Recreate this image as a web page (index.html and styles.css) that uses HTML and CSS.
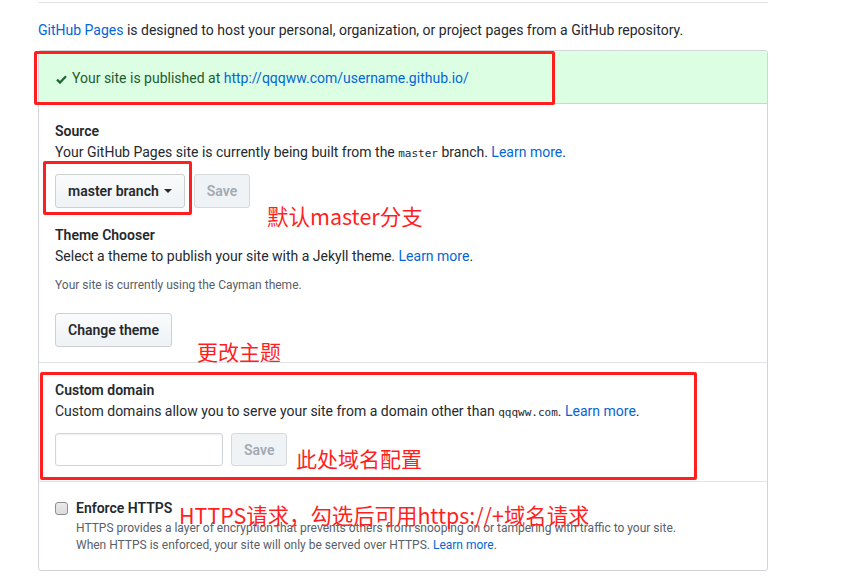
FILE: index.html
```html
<!DOCTYPE html>
<html lang="en">
<head>
<meta charset="utf-8">
<title>GitHub Pages</title>
<link rel="stylesheet" href="styles.css">
</head>
<body>
<div class="page">
  <div class="topline"></div>
  <p class="intro"><a href="#">GitHub Pages</a> is designed to host your personal, organization, or project pages from a GitHub repository.</p>
  <div class="panel">
    <div class="flash">
      <svg class="check" width="11" height="9" viewBox="0 0 11 9" aria-hidden="true"><polyline points="1,4.6 4,7.5 10,1.3" fill="none" stroke-width="2.3"/></svg>
      <span>Your site is published at <a href="#">http://qqqww.com/username.github.io/</a></span>
    </div>
    <div class="section">
      <h3 class="title">Source</h3>
      <p class="desc">Your GitHub Pages site is currently being built from the <code>master</code> branch. <a href="#">Learn more</a>.</p>
      <div class="row">
        <button class="btn"><span>master branch</span><span class="caret"></span></button>
        <button class="btn disabled">Save</button>
      </div>
      <div class="theme">
        <h3 class="title">Theme Chooser</h3>
        <p class="desc">Select a theme to publish your site with a Jekyll theme. <a href="#">Learn more</a>.</p>
        <p class="note">Your site is currently using the Cayman theme.</p>
        <button class="btn">Change theme</button>
      </div>
    </div>
    <div class="section">
      <h3 class="title">Custom domain</h3>
      <p class="desc">Custom domains allow you to serve your site from a domain other than <code>qqqww.com</code>. <a href="#">Learn more</a>.</p>
      <div class="row row-domain">
        <span class="input"></span>
        <button class="btn disabled">Save</button>
      </div>
    </div>
    <div class="section section-last">
      <div class="check-row">
        <span class="checkbox"></span>
        <div class="check-body">
          <h3 class="title">Enforce HTTPS</h3>
          <p class="small">HTTPS provides a layer of encryption that prevents others from snooping on or tampering with traffic to your site.<br>When HTTPS is enforced, your site will only be served over HTTPS. <a href="#">Learn more</a>.</p>
        </div>
      </div>
    </div>
  </div>

  <div class="mark mark-1"></div>
  <div class="mark mark-2"></div>
  <div class="mark mark-3"></div>
  <div class="ann ann-1">默认master分支</div>
  <div class="ann ann-2">更改主题</div>
  <div class="ann ann-3">此处域名配置</div>
  <div class="ann ann-4">HTTPS请求，勾选后可用https://+域名请求</div>
</div>
</body>
</html>
```
FILE: styles.css
```css
html, body {
  margin: 0;
  padding: 0;
  background: #fff;
}
body {
  font-family: Roboto, "Noto Sans", "Liberation Sans", sans-serif;
  font-size: 14px;
  line-height: 21px;
  color: #24292e;
}
a {
  color: #0366d6;
  text-decoration: none;
}
.page {
  position: relative;
  width: 842px;
  height: 580px;
  padding: 2px 0 0 38px;
  box-sizing: border-box;
}
.topline {
  width: 730px;
  border-bottom: 1px solid #e1e4e8;
}
.intro {
  margin: 17px 0 9px;
}
.panel {
  width: 730px;
  box-sizing: border-box;
  border: 1px solid #d1d5da;
  border-radius: 3px;
}
.flash {
  display: flex;
  align-items: center;
  gap: 5px;
  padding: 17px 16px 14px 17px;
  background: #dcffe4;
  border-bottom: 1px solid #b5e5c0;
  color: #1d5a2c;
  border-radius: 3px 3px 0 0;
}
.check {
  stroke: #1c6630;
  flex: none;
  margin-top: 1px;
}
.section {
  padding: 17px 16px 15px;
}
.section + .section {
  border-top: 1px solid #e1e4e8;
}
.section-last {
  padding-top: 16px;
  padding-bottom: 16px;
}
.title {
  margin: 0;
  font-size: 14px;
  font-weight: 600;
  line-height: 21px;
}
.desc {
  margin: 0;
}
code {
  font-family: "DejaVu Sans Mono", "Liberation Mono", monospace;
  font-size: 11px;
}
.row {
  display: flex;
  gap: 9px;
  margin-top: 10px;
}
.row-domain {
  gap: 8px;
}
.btn {
  display: inline-flex;
  align-items: center;
  height: 34px;
  box-sizing: border-box;
  padding: 6px 12px;
  font-family: inherit;
  font-size: 14px;
  font-weight: 600;
  line-height: 20px;
  color: #24292e;
  background: linear-gradient(#fafbfc, #eff3f6 90%);
  border: 1px solid #cdcfd1;
  border-radius: 3px;
}
.btn.disabled {
  color: #a3aab1;
  background: #eff3f6;
  border-color: #d7dadc;
}
.row-domain .btn {
  height: 33px;
}
.caret {
  display: inline-block;
  width: 0;
  height: 0;
  margin-left: 5px;
  border-top: 4px solid #24292e;
  border-left: 4px solid transparent;
  border-right: 4px solid transparent;
}
.theme {
  margin-top: 17px;
}
.note {
  margin: 9px 0 19px;
  font-size: 12px;
  line-height: 18px;
  color: #586069;
}
.input {
  display: block;
  width: 168px;
  height: 33px;
  box-sizing: border-box;
  border: 1px solid #d1d5da;
  border-radius: 3px;
  background: #fff;
  box-shadow: inset 0 1px 2px rgba(27, 31, 35, 0.075);
}
.check-row {
  display: flex;
  align-items: flex-start;
  gap: 8px;
}
.checkbox {
  flex: none;
  width: 13px;
  height: 13px;
  margin-top: 4px;
  box-sizing: border-box;
  border: 1px solid #8e8f8f;
  border-radius: 3px;
  background: linear-gradient(#e9e9e9, #dcdcdc);
}
.small {
  margin: 1px 0 0;
  font-size: 12px;
  line-height: 17px;
  color: #586069;
}

/* annotation overlays */
.mark {
  position: absolute;
  box-sizing: border-box;
  border: 3px solid #ff1f1f;
  border-radius: 2px;
}
.mark-1 { left: 34px; top: 51px; width: 521px; height: 54px; }
.mark-2 { left: 43px; top: 161px; width: 149px; height: 54px; }
.mark-3 { left: 40px; top: 372px; width: 657px; height: 108px; }
.ann {
  position: absolute;
  font-family: "Noto Sans CJK SC", "Noto Sans", sans-serif;
  font-size: 21px;
  line-height: 21px;
  color: #ff1f1f;
  white-space: nowrap;
}
.ann-1 { left: 267px; top: 205px; font-size: 21.5px; }
.ann-2 { left: 197px; top: 341px; }
.ann-3 { left: 296px; top: 448px; }
.ann-4 { left: 179px; top: 504px; font-size: 21.4px; }
```
